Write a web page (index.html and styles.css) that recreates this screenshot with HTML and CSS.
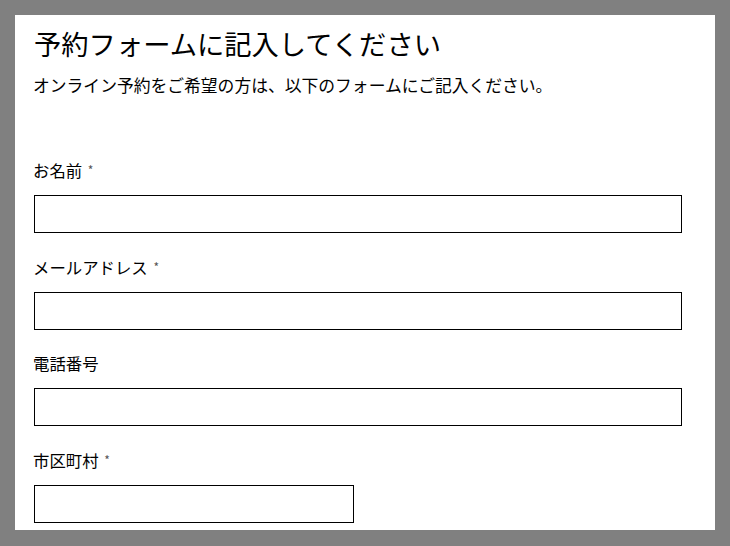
FILE: index.html
```html
<!DOCTYPE html>
<html lang="ja">
<head>
    <meta charset="UTF-8">
    <meta name="viewport" content="width=device-width, initial-scale=1.0">
    <title>予約フォーム</title>
    <link rel="stylesheet" href="styles.css">
</head>
<body>

    <div class="panel">
        <h1>予約フォームに記入してください</h1>
        <p class="lead">オンライン予約をご希望の方は、以下のフォームにご記入ください。</p>

        <form class="form">
            <div class="field">
                <label for="name">お名前 <span class="req">*</span></label>
                <input type="text" id="name">
            </div>

            <div class="field">
                <label for="email">メールアドレス <span class="req">*</span></label>
                <input type="email" id="email">
            </div>

            <div class="field">
                <label for="tel">電話番号</label>
                <input type="tel" id="tel">
            </div>

            <div class="field">
                <label for="city">市区町村 <span class="req">*</span></label>
                <input type="text" id="city" class="short">
            </div>
        </form>
    </div>

</body>
</html>
```

FILE: styles.css
```css
html, body {
    margin: 0;
    height: 100%;
}

body {
    background-color: #808080;
    font-family: 'Noto Sans CJK JP', 'Noto Sans', sans-serif;
    color: #000;
    padding: 15px;
    box-sizing: border-box;
}

.panel {
    background: white;
    height: 515px;
    overflow: hidden;
    padding: 8px 34px 0 18px;
    box-sizing: border-box;
}

h1 {
    font-size: 27.3px;
    font-weight: normal;
    line-height: 40px;
    margin: 0;
    padding-left: 1px;
}

.lead {
    font-size: 16.8px;
    line-height: 24px;
    margin: 10px 0 0;
}

.form {
    margin-top: 61px;
}

.field {
    margin-bottom: 21.7px;
}

label {
    display: block;
    font-size: 16.4px;
    line-height: 24px;
    margin-bottom: 13px;
}

.req {
    color: #555;
    font-size: 12px;
    vertical-align: top;
    margin-left: 2px;
}

input {
    display: block;
    width: 100%;
    height: 38px;
    margin-left: 1px;
    border: 1px solid #000;
    border-radius: 0;
    padding: 4px 8px;
    box-sizing: border-box;
    font-size: 16px;
    font-family: inherit;
}

input.short {
    width: 320px;
}
```
